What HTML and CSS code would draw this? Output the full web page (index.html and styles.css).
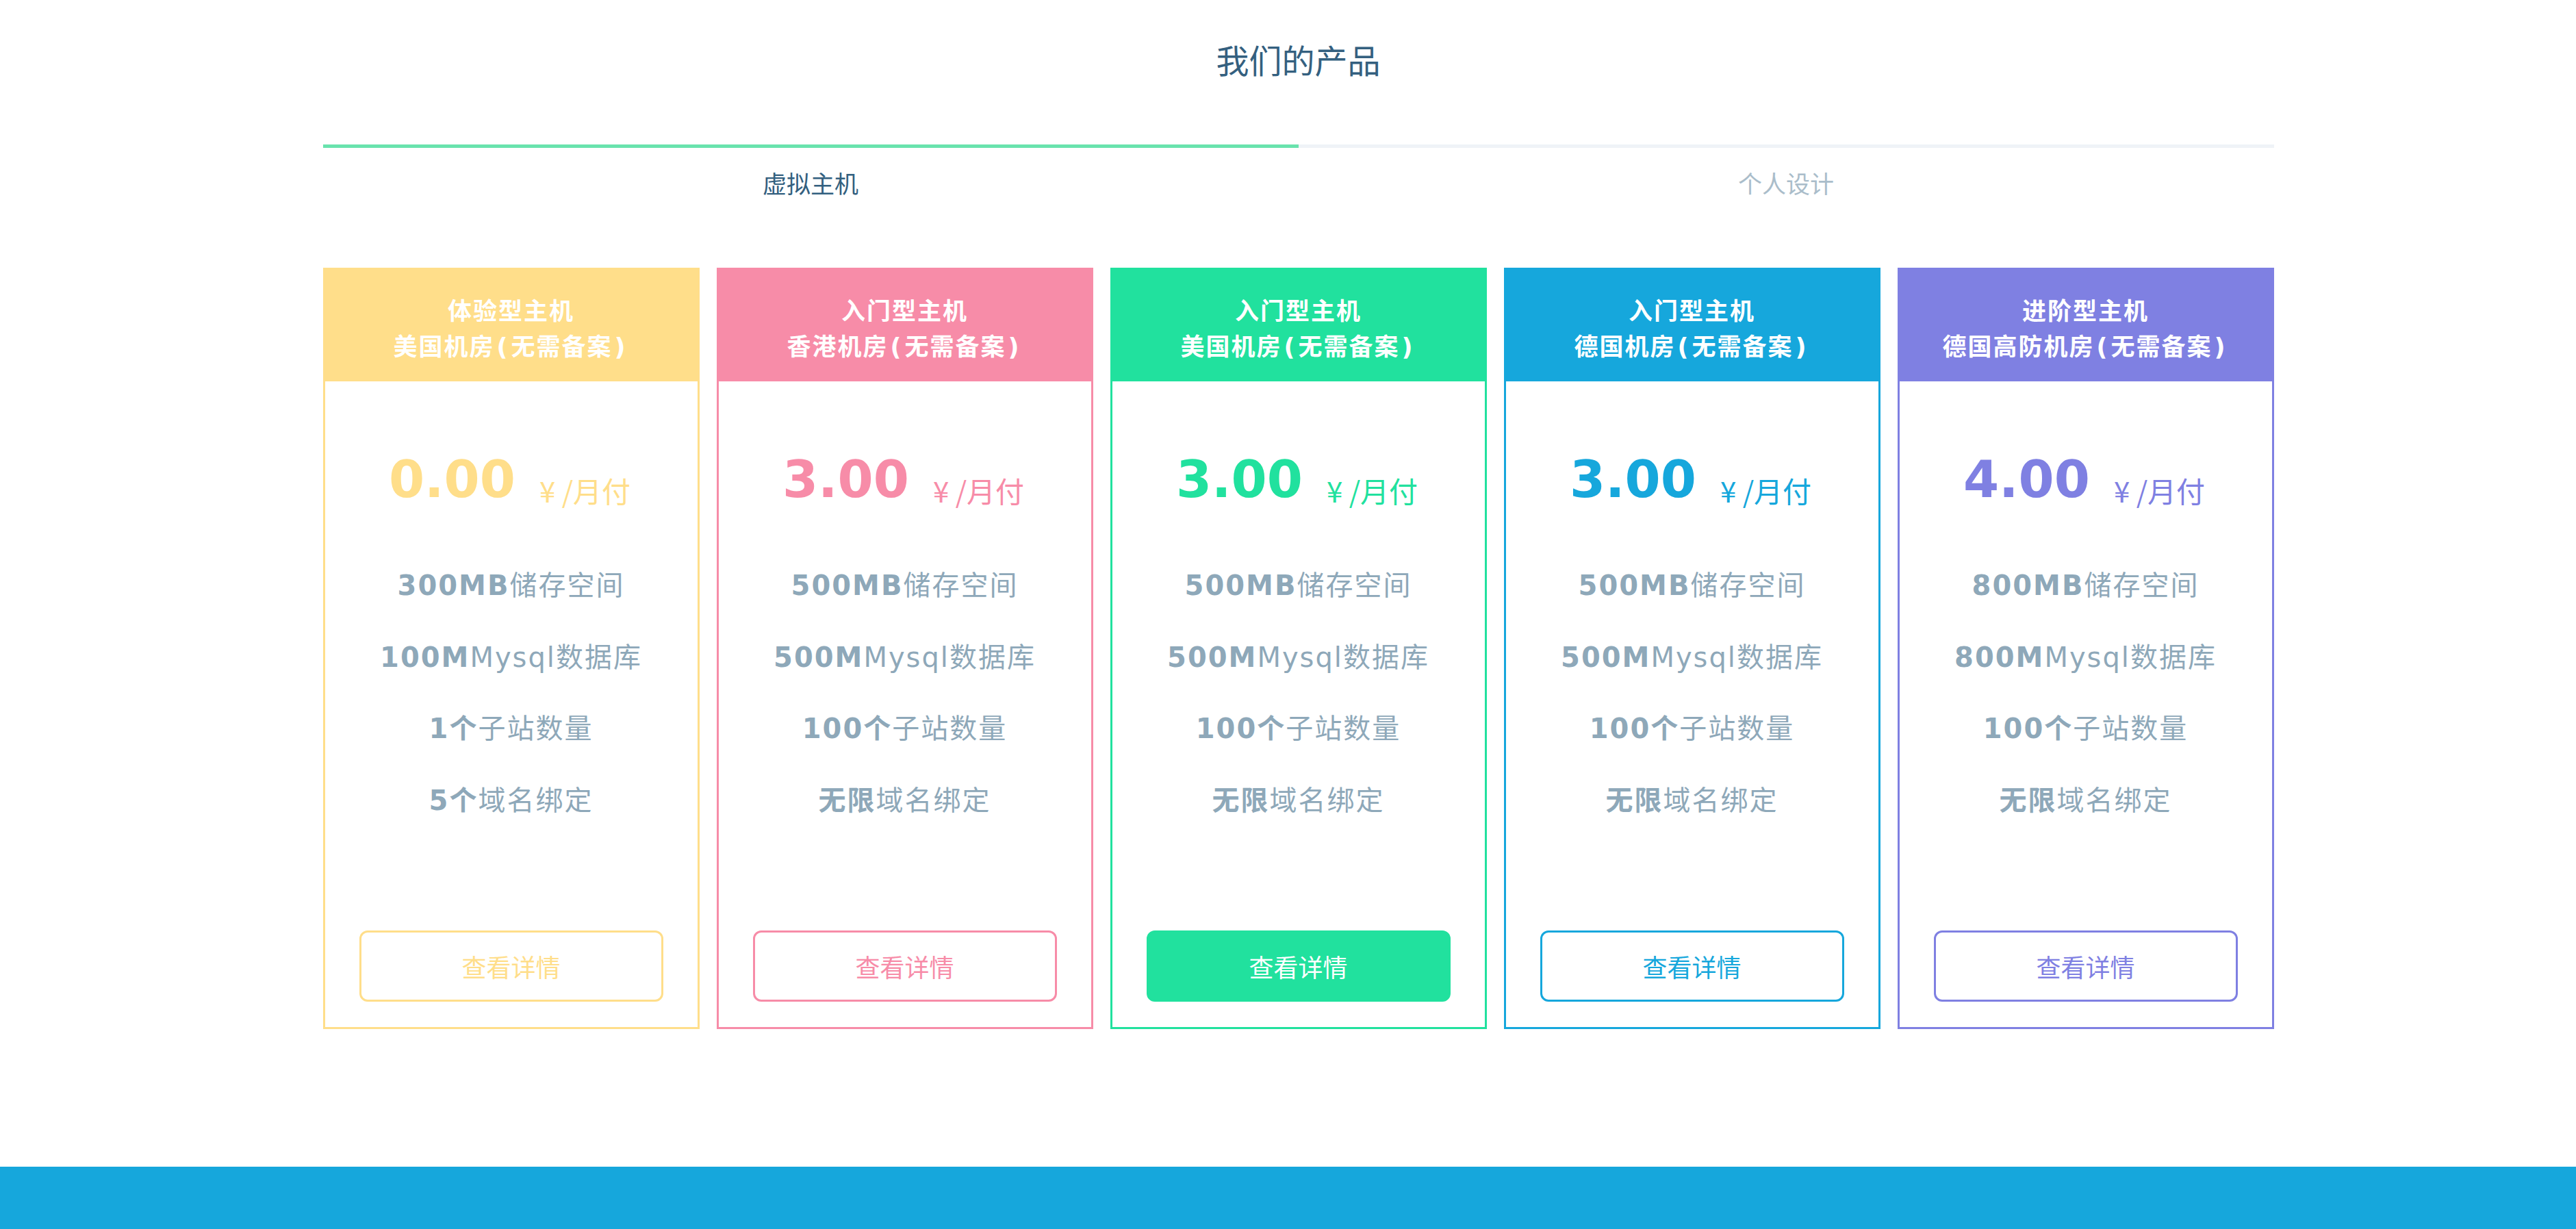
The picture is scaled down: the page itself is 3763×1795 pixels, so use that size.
FILE: index.html
```html
<!DOCTYPE html>
<html lang="zh-CN">
<head>
<meta charset="utf-8">
<title>我们的产品</title>
<link rel="stylesheet" href="styles.css">
</head>
<body>
<div class="outer">
  <div class="wrap">
    <h2 class="title">我们的产品</h2>
    <div class="tabs">
      <div class="tab active">虚拟主机</div>
      <div class="tab">个人设计</div>
    </div>
    <div class="cards">
      <div class="card yellow">
        <div class="head">体验型主机<br>美国机房<span class="pr">(</span>无需备案<span class="pr">)</span></div>
        <div class="price"><span class="num">0.00</span><span class="unit">¥ /月付</span></div>
        <ul class="feats">
          <li><b>300MB</b>储存空间</li>
          <li><b>100M</b>Mysql数据库</li>
          <li><b>1个</b>子站数量</li>
          <li><b>5个</b>域名绑定</li>
        </ul>
        <a class="btn">查看详情</a>
      </div>
      <div class="card pink">
        <div class="head">入门型主机<br>香港机房<span class="pr">(</span>无需备案<span class="pr">)</span></div>
        <div class="price"><span class="num">3.00</span><span class="unit">¥ /月付</span></div>
        <ul class="feats">
          <li><b>500MB</b>储存空间</li>
          <li><b>500M</b>Mysql数据库</li>
          <li><b>100个</b>子站数量</li>
          <li><b>无限</b>域名绑定</li>
        </ul>
        <a class="btn">查看详情</a>
      </div>
      <div class="card green">
        <div class="head">入门型主机<br>美国机房<span class="pr">(</span>无需备案<span class="pr">)</span></div>
        <div class="price"><span class="num">3.00</span><span class="unit">¥ /月付</span></div>
        <ul class="feats">
          <li><b>500MB</b>储存空间</li>
          <li><b>500M</b>Mysql数据库</li>
          <li><b>100个</b>子站数量</li>
          <li><b>无限</b>域名绑定</li>
        </ul>
        <a class="btn filled">查看详情</a>
      </div>
      <div class="card blue">
        <div class="head">入门型主机<br>德国机房<span class="pr">(</span>无需备案<span class="pr">)</span></div>
        <div class="price"><span class="num">3.00</span><span class="unit">¥ /月付</span></div>
        <ul class="feats">
          <li><b>500MB</b>储存空间</li>
          <li><b>500M</b>Mysql数据库</li>
          <li><b>100个</b>子站数量</li>
          <li><b>无限</b>域名绑定</li>
        </ul>
        <a class="btn">查看详情</a>
      </div>
      <div class="card purple">
        <div class="head">进阶型主机<br>德国高防机房<span class="pr">(</span>无需备案<span class="pr">)</span></div>
        <div class="price"><span class="num">4.00</span><span class="unit">¥ /月付</span></div>
        <ul class="feats">
          <li><b>800MB</b>储存空间</li>
          <li><b>800M</b>Mysql数据库</li>
          <li><b>100个</b>子站数量</li>
          <li><b>无限</b>域名绑定</li>
        </ul>
        <a class="btn">查看详情</a>
      </div>
    </div>
  </div>
</div>
<footer class="footer"></footer>
</body>
</html>
```

FILE: styles.css
```css
* { box-sizing: border-box; }
html, body { margin: 0; padding: 0; background: #fff; }
body { font-family: "Noto Sans CJK SC", sans-serif; overflow: hidden; }

.outer { width: 2880px; margin: 0 auto; padding-left: 30px; }
.wrap { width: 2850px; }

.title {
  margin: 62px 0 0;
  font-size: 48px;
  line-height: 48px;
  font-weight: 400;
  color: #34607f;
  text-align: center;
}

.tabs { display: flex; margin-top: 101px; }
.tab {
  flex: 1;
  border-top: 5px solid #eff3f7;
  padding-top: 33px;
  font-size: 35px;
  line-height: 36px;
  color: #aabdca;
  text-align: center;
}
.tab.active { border-top-color: #69e3ad; color: #33607f; }

.cards {
  display: grid;
  grid-template-columns: repeat(5, 1fr);
  gap: 25px;
  margin-top: 106px;
}

.card {
  --c: #ffde8a;
  border: 3px solid var(--c);
  height: 1112px;
  display: flex;
  flex-direction: column;
  align-items: center;
}
.card.yellow { --c: #ffde8a; }
.card.pink { --c: #f78ca8; }
.card.green { --c: #21e19e; }
.card.blue { --c: #16a7dc; }
.card.purple { --c: #7f80e2; }

.head {
  align-self: stretch;
  margin: -3px -3px 0;
  height: 166px;
  background: var(--c);
  color: #fff;
  font-weight: 700;
  font-size: 35px;
  line-height: 52px;
  letter-spacing: 2px;
  text-align: center;
  padding-top: 35px;
  white-space: nowrap;
}
.head .pr { font-family: "DejaVu Sans", sans-serif; margin: 0 3px; }

.price {
  margin-top: 106px;
  margin-right: 4px;
  color: var(--c);
  display: flex;
  align-items: baseline;
  line-height: 74px;
}
.num {
  font-family: "DejaVu Sans", sans-serif;
  font-weight: 700;
  font-size: 75px;
}
.unit {
  font-size: 42px;
  margin-left: 35px;
  position: relative;
  top: 8px;
}

.feats {
  list-style: none;
  margin: 58px 0 0;
  padding: 0;
  text-align: center;
  color: #8ea8b9;
  font-size: 40px;
  line-height: 104.5px;
  letter-spacing: 2px;
  font-family: "DejaVu Sans", "Noto Sans CJK SC", sans-serif;
}
.feats li { white-space: nowrap; }
.feats li b { font-weight: 700; }

.btn {
  margin-top: auto;
  margin-bottom: 37px;
  width: 444px;
  height: 104px;
  border: 3px solid var(--c);
  border-radius: 12px;
  color: var(--c);
  font-size: 36px;
  display: flex;
  align-items: center;
  justify-content: center;
  cursor: pointer;
}
.btn.filled { background: var(--c); color: #fff; }

.footer {
  margin-top: 201px;
  height: 200px;
  background: #16a7dc;
}
```
